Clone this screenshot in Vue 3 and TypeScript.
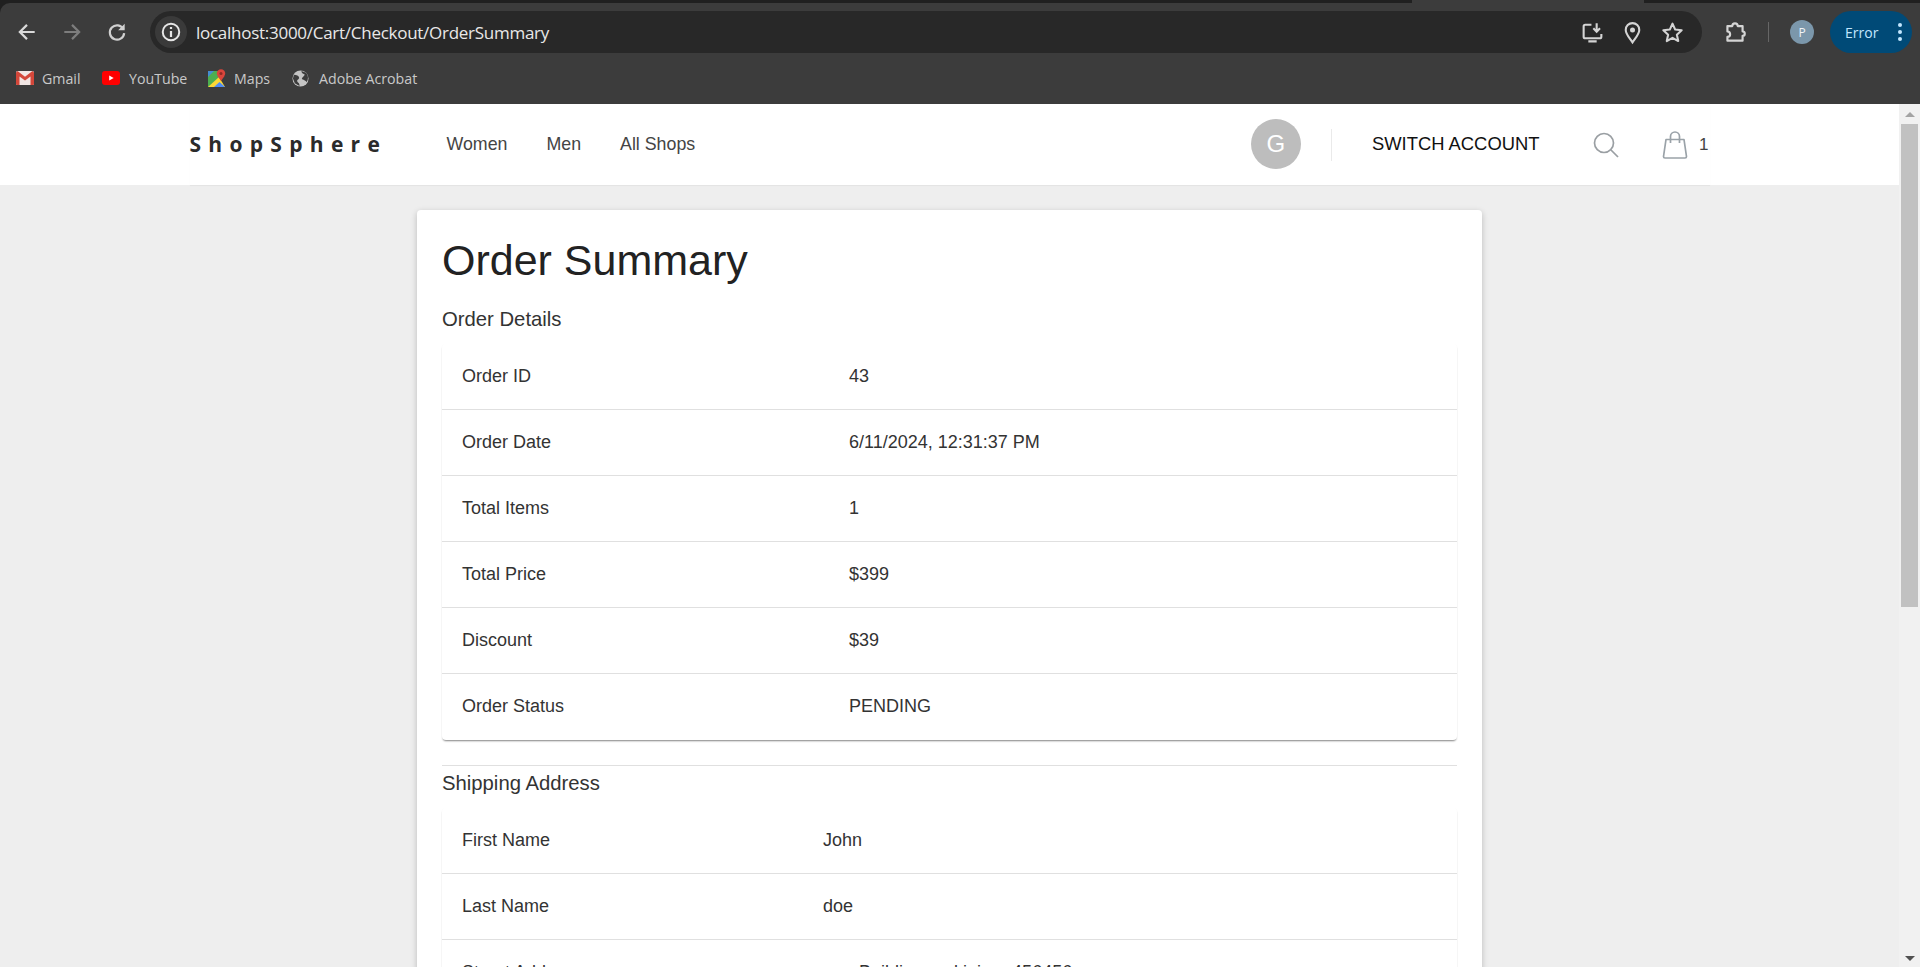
<template>
  <div class="page">
    <div class="tab-strip"><div class="active-tab" /></div>

    <header class="browser-bar">
      <div class="toolbar">
        <div class="nav-buttons">
          <svg viewBox="0 0 20 20" class="chrome-icon"><path d="M17 10H4M10 3.500 3.500 10l6.500 6.500" fill="none" stroke="#d9d9d9" stroke-width="2" /></svg>
          <svg viewBox="0 0 20 20" class="chrome-icon"><path d="M3 10h13M10 3.500l6.500 6.500-6.500 6.500" fill="none" stroke="#7d7d7d" stroke-width="2" /></svg>
          <svg viewBox="0 0 20 20" class="chrome-icon"><path d="M15.800 7.500A6.500 6.500 0 1 0 16.500 11" fill="none" stroke="#d0d0d0" stroke-width="2" /><path d="M17 2.500v6h-6z" fill="#d0d0d0" /></svg>
        </div>
        <div class="omnibox">
          <div class="site-info">
            <svg viewBox="0 0 20 20" class="info-icon"><circle cx="10" cy="10" r="7.500" fill="none" stroke="#e6e6e6" stroke-width="1.800" /><path d="M10 9v5.500M10 5.500v1.800" stroke="#e6e6e6" stroke-width="2" /></svg>
          </div>
          <span class="url">localhost:3000/Cart/Checkout/OrderSummary</span>
          <div class="omni-actions">
            <svg viewBox="0 0 24 24" class="omni-icon"><path d="M11 4.500H5a1.500 1.500 0 0 0-1.500 1.500v10A1.500 1.500 0 0 0 5 17.500h14a1.500 1.500 0 0 0 1.500-1.500v-2.500M8 20.500h8" fill="none" stroke="#d4d4d4" stroke-width="2" /><path d="M16 3v8M12.800 8l3.200 3.200L19.200 8" fill="none" stroke="#d4d4d4" stroke-width="2" /></svg>
            <svg viewBox="0 0 24 24" class="omni-icon"><path d="M12 21.500c-3.500-5-6.500-8.300-6.500-12a6.500 6.500 0 0 1 13 0c0 3.700-3 7-6.500 12z" fill="none" stroke="#d4d4d4" stroke-width="2" /><circle cx="12" cy="9.500" r="2.400" fill="#d4d4d4" /></svg>
            <svg viewBox="0 0 24 24" class="omni-icon"><path d="m12 3.500 2.600 5.700 6.200.7-4.600 4.200 1.300 6.100-5.500-3.100-5.500 3.100 1.300-6.100-4.600-4.200 6.200-.7z" fill="none" stroke="#d4d4d4" stroke-width="2" stroke-linejoin="round" /></svg>
          </div>
        </div>
        <svg viewBox="0 0 24 24" class="extension-icon"><path d="M5 6.500h4.500a2.500 2.500 0 0 1 5 0H19v5a2 2 0 0 1 0 4v4.500H5v-3.500a2.500 2.500 0 0 0 0-5z" fill="none" stroke="#d4d4d4" stroke-width="2" stroke-linejoin="round" /></svg>
        <div class="toolbar-sep" />
        <div class="profile">P</div>
        <div class="error-pill">
          <span>Error</span>
          <span class="pill-dots"><i /><i /><i /></span>
        </div>
      </div>

      <div class="bookmarks">
        <div class="bookmark bookmark-gmail">
          <svg viewBox="0 0 18 14" class="bm-icon"><rect width="18" height="14" rx="1.500" fill="#f1e6e4" /><path d="M0 1.500v11.500a1 1 0 0 0 1 1h2.500V5.500L9 9.500l5.500-4V14H17a1 1 0 0 0 1-1V1.500L16.500 0 9 5.800 1.500 0z" fill="#d4473a" /></svg>
          <span>Gmail</span>
        </div>
        <div class="bookmark bookmark-youtube">
          <svg viewBox="0 0 18 14" class="bm-icon"><rect width="18" height="14" rx="3" fill="#f00" /><path d="m7.200 4.500 4.500 2.500-4.500 2.500z" fill="#fff" /></svg>
          <span>YouTube</span>
        </div>
        <div class="bookmark bookmark-maps">
          <svg viewBox="0 0 18 18" class="bm-icon"><path d="M0 2h11v16H0z" fill="#4caf50" /><path d="M0 18 11 8l6 10z" fill="#fdd835" /><path d="M0 2h6L0 8z" fill="#4285f4" opacity=".8" /><path d="M6 18l5.500-5 5.500 5z" fill="#4f8cf5" /><circle cx="13" cy="4.500" r="4.200" fill="#d9453c" /><path d="M9.500 7h7L13 12z" fill="#d9453c" /><circle cx="13" cy="4.500" r="1.500" fill="#8e2a24" /></svg>
          <span>Maps</span>
        </div>
        <div class="bookmark bookmark-adobe">
          <svg viewBox="0 0 18 18" class="bm-icon"><circle cx="9" cy="9" r="8.500" fill="#c4c4c4" /><path d="M2 5c3 0 5 1 5.500 3S5 10 5.500 12 8 13 8 17L3 14 1 9zM10 1c0 2 1.500 3 3 3.500S11 7.500 10.500 9 14 10 15.500 13c2-3 2-7-.5-10z" fill="#3c3c3c" /></svg>
          <span>Adobe Acrobat</span>
        </div>
      </div>
    </header>

    <div class="viewport">
      <div class="content">
        <nav class="site-nav">
          <div class="site-nav-inner">
            <div class="logo">ShopSphere</div>
            <div class="nav-links">
              <a v-for="link in navLinks" :key="link">{{ link }}</a>
            </div>
            <div class="nav-right">
              <div class="avatar">G</div>
              <div class="nav-sep" />
              <span class="switch">SWITCH ACCOUNT</span>
              <svg viewBox="0 0 26 26" class="search-icon"><circle cx="11" cy="11" r="9.500" fill="none" stroke="#9a9fa3" stroke-width="1.700" /><path d="m18 18 7 7" stroke="#9a9fa3" stroke-width="1.700" /></svg>
              <svg viewBox="0 0 26 28" class="bag-icon"><path d="M4 8.500h18l2.500 17a1.500 1.500 0 0 1-1.500 1.500H3a1.500 1.500 0 0 1-1.500-1.500z" fill="none" stroke="#9aa2a8" stroke-width="1.700" stroke-linejoin="round" /><path d="M8.500 12V5.500a4.500 4.500 0 0 1 9 0V12" fill="none" stroke="#9aa2a8" stroke-width="1.700" /></svg>
              <span class="cart-count">1</span>
            </div>
          </div>
        </nav>

        <main class="card">
          <h1>Order Summary</h1>
          <h2 class="first-heading">Order Details</h2>
          <div class="table table-order">
            <div v-for="row in orderRows" :key="row.label" class="row">
              <span>{{ row.label }}</span>
              <span>{{ row.value }}</span>
            </div>
          </div>
          <hr />
          <h2>Shipping Address</h2>
          <div class="table table-shipping">
            <div v-for="row in shippingRows" :key="row.label" class="row">
              <span>{{ row.label }}</span>
              <span>{{ row.value }}</span>
            </div>
          </div>
        </main>
      </div>

      <div class="scrollbar">
        <div class="arrow arrow-up" />
        <div class="thumb" />
        <div class="arrow arrow-down" />
      </div>
    </div>
  </div>
</template>

<script setup lang="ts">
interface DetailRow {
  label: string
  value: string
}

const navLinks = ['Women', 'Men', 'All Shops']

const orderRows: DetailRow[] = [
  { label: 'Order ID', value: '43' },
  { label: 'Order Date', value: '6/11/2024, 12:31:37 PM' },
  { label: 'Total Items', value: '1' },
  { label: 'Total Price', value: '$399' },
  { label: 'Discount', value: '$39' },
  { label: 'Order Status', value: 'PENDING' }
]

const shippingRows: DetailRow[] = [
  { label: 'First Name', value: 'John' },
  { label: 'Last Name', value: 'doe' },
  { label: 'Street Address', value: 'ram Building and jaipur 456456' },
  { label: 'City', value: 'jaipur' }
]
</script>

<style>
html,
body {
  margin: 0;
  height: 100%;
  overflow: hidden;
}
</style>

<style scoped>
.page {
  display: flex;
  flex-direction: column;
  height: 967px;
  overflow: hidden;
  background: #202020;
  font-family: "Liberation Sans", Arial, sans-serif;
}

.tab-strip {
  height: 3px;
  flex: none;
  padding-left: 1412px;
}

.active-tab {
  width: 232px;
  height: 3px;
  background: #3c3c3c;
}

.browser-bar {
  flex: none;
  height: 101px;
  background: #3c3c3c;
  border-top-left-radius: 10px;
  font-family: "Open Sans", sans-serif;
}

.toolbar {
  display: flex;
  align-items: center;
  height: 50px;
  padding: 8px 8px 0 0;
  box-sizing: border-box;
}

.nav-buttons {
  display: flex;
  gap: 23px;
  width: 150px;
  padding-left: 16px;
  box-sizing: border-box;
  flex: none;
}

.chrome-icon {
  width: 22px;
  height: 22px;
}

.omnibox {
  display: flex;
  align-items: center;
  flex: none;
  width: 1552px;
  height: 42px;
  border-radius: 21px;
  background: #282828;
  box-sizing: border-box;
}

.site-info {
  display: flex;
  align-items: center;
  justify-content: center;
  width: 32px;
  height: 32px;
  margin-left: 5px;
  border-radius: 50%;
  background: #3a3a3a;
}

.info-icon {
  width: 22px;
  height: 22px;
}

.url {
  margin-left: 9px;
  color: #e8e8e8;
  font-size: 17px;
  letter-spacing: -0.27px;
}

.omni-actions {
  display: flex;
  gap: 15px;
  margin-left: auto;
  margin-right: 17px;
}

.omni-icon {
  width: 25px;
  height: 25px;
}

.extension-icon {
  width: 26px;
  height: 26px;
  margin-left: 20px;
}

.toolbar-sep {
  width: 1px;
  height: 20px;
  margin-left: 20px;
  background: #666;
}

.profile {
  display: flex;
  align-items: center;
  justify-content: center;
  width: 24px;
  height: 24px;
  margin-left: 21px;
  border-radius: 50%;
  background: #7b97ab;
  color: #f1f4f6;
  font-size: 12px;
}

.error-pill {
  display: flex;
  align-items: center;
  justify-content: space-between;
  width: 82px;
  height: 42px;
  margin-left: 16px;
  padding: 0 10px 0 15px;
  box-sizing: border-box;
  border-radius: 21px;
  background: #004a77;
  color: #c2e7ff;
  font-size: 14px;
}

.pill-dots {
  display: flex;
  flex-direction: column;
  gap: 3px;
}

.pill-dots i {
  display: block;
  width: 4px;
  height: 4px;
  border-radius: 50%;
  background: #c2e7ff;
}

.bookmarks {
  display: flex;
  align-items: center;
  height: 50px;
  padding-left: 16px;
  color: #c9c9c9;
  font-size: 14.200px;
}

.bookmark {
  display: flex;
  align-items: center;
  gap: 8px;
  flex: none;
}

.bm-icon {
  display: block;
}

.bookmark-gmail {
  width: 86px;
}

.bookmark-gmail .bm-icon,
.bookmark-youtube .bm-icon {
  width: 18px;
  height: 14px;
}

.bookmark-youtube {
  width: 106px;
  gap: 9px;
}

.bookmark-maps {
  width: 84px;
}

.bookmark-maps .bm-icon {
  width: 18px;
  height: 18px;
}

.bookmark-adobe {
  gap: 10px;
}

.bookmark-adobe .bm-icon {
  width: 17px;
  height: 17px;
}

.viewport {
  display: flex;
  flex: 1;
  min-height: 0;
}

.content {
  flex: 1;
  min-width: 0;
  overflow: hidden;
  background: #eee;
}

.site-nav {
  background: #fff;
}

.site-nav-inner {
  display: flex;
  align-items: center;
  width: 1520px;
  height: 81px;
  margin: 0 auto;
  box-shadow: 0 1px 1px rgba(0, 0, 0, 0.04);
}

.logo {
  width: 257px;
  margin-bottom: 2px;
  color: #2b2b2b;
  font-family: "Open Sans", sans-serif;
  font-size: 21px;
  font-weight: 700;
  letter-spacing: 7.300px;
}

.nav-links {
  display: flex;
  gap: 39px;
  color: #444;
  font-size: 17.800px;
}

.nav-right {
  display: flex;
  align-items: center;
  margin-left: auto;
}

.avatar {
  display: flex;
  align-items: center;
  justify-content: center;
  width: 50px;
  height: 50px;
  margin-bottom: 1px;
  border-radius: 50%;
  background: #bdbdbd;
  color: #fff;
  font-size: 24px;
}

.nav-sep {
  width: 1px;
  height: 32px;
  margin-left: 30px;
  background: #eaeaea;
}

.switch {
  margin-left: 40px;
  margin-bottom: 2px;
  color: #111;
  font-size: 18.400px;
}

.search-icon {
  width: 26px;
  height: 26px;
  margin-left: 53px;
}

.bag-icon {
  width: 26px;
  height: 28px;
  margin-left: 43px;
}

.cart-count {
  width: 10px;
  margin-left: 11.500px;
  margin-right: 0.500px;
  color: #444;
  font-size: 17px;
}

.card {
  width: 1065px;
  margin: 25px auto 0;
  padding: 25px;
  box-sizing: border-box;
  border-radius: 4px;
  background: #fff;
  box-shadow: 0 2px 6px rgba(0, 0, 0, 0.22);
  color: #222;
}

h1 {
  margin: 0;
  font-size: 43px;
  font-weight: 400;
  line-height: 50px;
}

h2 {
  margin: 0;
  font-size: 20.300px;
  font-weight: 400;
  line-height: 24px;
  color: #333;
}

.first-heading {
  margin-top: 22px;
}

hr {
  height: 1px;
  margin: 25px 0 5px;
  border: 0;
  background: #e0e0e0;
}

.table {
  margin-top: 13px;
  border-radius: 4px;
  background: #fff;
  box-shadow: 0 2px 2px -1px rgba(0, 0, 0, 0.45), 0 1px 2px rgba(0, 0, 0, 0.06);
}

.row {
  display: grid;
  align-items: center;
  height: 66px;
  padding: 0 20px;
  box-sizing: border-box;
  border-bottom: 1px solid #e0e0e0;
  font-size: 18px;
  color: #333;
}

.row:last-child {
  border-bottom-color: transparent;
}

.table-order .row {
  grid-template-columns: 387px 1fr;
}

.table-shipping .row {
  grid-template-columns: 361px 1fr;
}

.scrollbar {
  display: flex;
  flex-direction: column;
  align-items: center;
  flex: none;
  width: 21px;
  background: #f1f1f1;
}

.arrow {
  flex: none;
  width: 0;
  height: 0;
  border-left: 5px solid transparent;
  border-right: 5px solid transparent;
}

.arrow-up {
  margin-top: 8px;
  border-bottom: 5px solid #a3a3a3;
}

.thumb {
  width: 17px;
  height: 483px;
  margin-top: 7px;
  background: #c1c1c1;
}

.arrow-down {
  margin-top: auto;
  margin-bottom: 6px;
  border-top: 5px solid #505050;
}
</style>
